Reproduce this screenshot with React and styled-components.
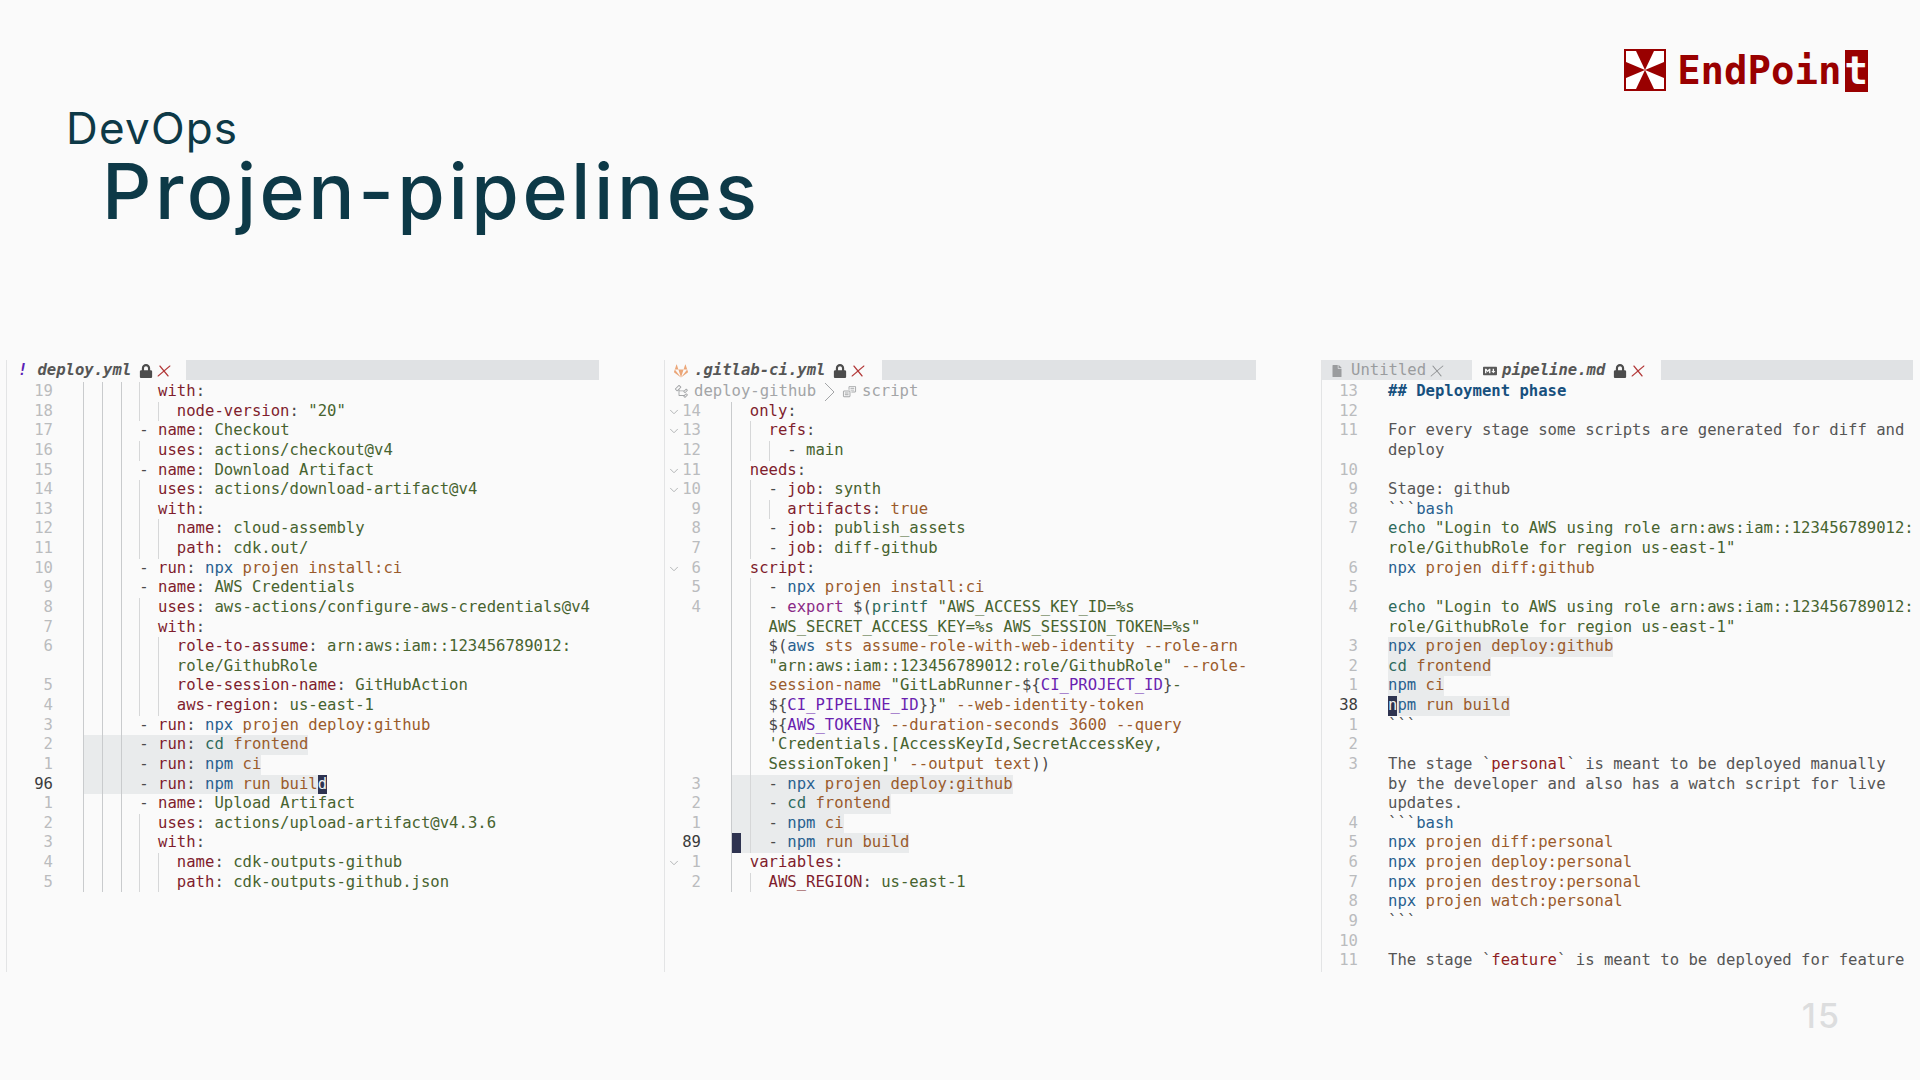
import React from 'react'
import styled, { createGlobalStyle } from 'styled-components'
import { FaFile, FaGitlab, FaLock, FaMarkdown } from 'react-icons/fa'
import { VscSymbolClass, VscSymbolEnum } from 'react-icons/vsc'
import { ChevronDown, X } from 'lucide-react'

const MONO = '"DejaVu Sans Mono", "Liberation Mono", monospace'

const TONES = {
  k: '#7f1d2d',
  g: '#47632f',
  b: '#28608f',
  o: '#9a5b2c',
  t: '#2d6a5c',
  p: '#4a4a4a',
  m: '#8a2a86',
  v: '#6a1fb0',
  r: '#8f1d22',
  x: '#555555',
}

const GlobalStyle = createGlobalStyle`
  html, body {
    margin: 0;
    padding: 0;
    background: #fafafa;
  }
`

const Slide = styled.div`
  width: 1920px;
  height: 1080px;
  display: flex;
  flex-direction: column;
  background: #fafafa;
  overflow: hidden;
`

const Header = styled.header`
  height: 360px;
  display: flex;
  justify-content: space-between;
  align-items: flex-start;
  box-sizing: border-box;
`

const Titles = styled.div`
  display: flex;
  flex-direction: column;
  padding: 103px 0 0 66px;
  color: #0d3947;
  font-family: Inter, Lato, sans-serif;
`

const Section = styled.div`
  font-size: 44px;
  line-height: 50px;
  letter-spacing: 1.2px;
`

const Title = styled.h1`
  margin: 0 0 0 36px;
  font-size: 77px;
  line-height: 76px;
  font-weight: 500;
  letter-spacing: 3.5px;
`

const Logo = styled.div`
  display: flex;
  align-items: center;
  gap: 11px;
  padding: 47px 52px 0 0;
  color: #990000;
  font-family: ${MONO};
  font-weight: 700;
  font-size: 39px;
  line-height: 42px;
`

const LogoWord = styled.div`
  display: flex;
  align-items: center;
  padding-top: 3px;
`

const LogoBox = styled.span`
  margin-left: 3px;
  background: #990000;
  color: #fafafa;
`

const Editors = styled.main`
  display: grid;
  grid-template-columns: 593px 592px 592px;
  column-gap: 65px;
  height: 612px;
  padding-left: 6px;
`

const Panel = styled.section`
  display: flex;
  flex-direction: column;
  border-left: 1px solid #e3e4e5;
  font-family: ${MONO};
  font-size: 15.6px;
  line-height: 19.63px;
  min-width: 0;
`

const TabBar = styled.div`
  display: flex;
  height: 20px;
  flex: none;
  margin-bottom: 2px;
`

const Tab = styled.div`
  display: flex;
  align-items: center;
  gap: 8px;
  padding: 1px ${p => p.$right || 12}px 0 ${p => p.$left || 11}px;
  color: ${p => (p.$muted ? '#9a9c9e' : '#565656')};
  background: ${p => (p.$muted ? '#e3e5e7' : 'transparent')};
  font-style: ${p => (p.$muted ? 'normal' : 'italic')};
  font-weight: ${p => (p.$muted ? 400 : 700)};
  white-space: nowrap;
`

const TabLabel = styled.span`
  margin-left: ${p => p.$shift || 0}px;
`

const TabFiller = styled.div`
  flex: 1;
  background: #e0e2e4;
`

const YamlMark = styled.span`
  color: #5b21b6;
  font-weight: 700;
  font-style: italic;
`

const Close = styled(X)`
  color: ${p => (p.$muted ? '#8f9193' : '#b33a3a')};
  transform: skewX(-10deg);
  margin-left: -7px;
`

const Crumbs = styled.div`
  display: flex;
  align-items: center;
  height: 19.63px;
  padding-left: 9px;
  gap: 5px;
  color: #a3a5a7;
`

const CrumbSeparator = styled.svg`
  margin: 0 2px 0 3px;
`

const Row = styled.div`
  display: flex;
  height: 19.63px;
  white-space: pre;
`

const Gutter = styled.div`
  flex: none;
  display: flex;
  justify-content: flex-end;
  align-items: center;
  position: relative;
  box-sizing: border-box;
  width: ${p => p.$width}px;
  padding-right: 30px;
  color: ${p => (p.$current ? '#3c3c3c' : '#babcbe')};
`

const Fold = styled(ChevronDown)`
  position: absolute;
  left: 2px;
  top: 3px;
  color: #a9abad;
`

const Code = styled.div`
  display: flex;
  background: ${p => (p.$selected ? '#e9ebec' : 'transparent')};
`

const Guide = styled.span`
  position: relative;
  flex: none;
  width: 2ch;
  box-sizing: border-box;
  border-left: 1px solid ${p => (p.$strong ? '#c9cbcd' : '#d6d7d8')};
`

const BlockCursor = styled.span`
  position: absolute;
  left: 0;
  top: 0;
  bottom: 0;
  width: 1ch;
  background: #2e3350;
`

const Token = styled.span`
  color: ${p => TONES[p.$tone]};
`

const Caret = styled.span`
  background: #2e3350;
  color: #f2f2f2;
`

const Heading = styled.span`
  color: #17507e;
  font-weight: 700;
`

const Footer = styled.footer`
  display: flex;
  justify-content: flex-end;
  padding: 24px 79px 0 0;
  color: #dcddde;
  font-family: Inter, sans-serif;
  font-weight: 500;
  font-size: 34px;
  line-height: 40px;
  letter-spacing: 2px;
`

// small builders so that the yaml rows stay readable
const pair = (key, value, tone = 'g') => [['k', key], ['p', ': '], [tone, value]]
const head = key => [['k', key], ['p', ':']]
const dash = parts => [['p', '- '], ...parts]
const shell = (cmd, rest, tone = 'b') => [[tone, cmd], ['o', ' ' + rest]]

const deployRows = [
  { n: 19, g: 4, c: head('with') },
  { n: 18, g: 5, c: pair('node-version', '"20"') },
  { n: 17, g: 3, c: dash(pair('name', 'Checkout')) },
  { n: 16, g: 4, c: pair('uses', 'actions/checkout@v4') },
  { n: 15, g: 3, c: dash(pair('name', 'Download Artifact')) },
  { n: 14, g: 4, c: pair('uses', 'actions/download-artifact@v4') },
  { n: 13, g: 4, c: head('with') },
  { n: 12, g: 5, c: pair('name', 'cloud-assembly') },
  { n: 11, g: 5, c: pair('path', 'cdk.out/') },
  { n: 10, g: 3, c: dash([['k', 'run'], ['p', ': '], ...shell('npx', 'projen install:ci')]) },
  { n: 9, g: 3, c: dash(pair('name', 'AWS Credentials')) },
  { n: 8, g: 4, c: pair('uses', 'aws-actions/configure-aws-credentials@v4') },
  { n: 7, g: 4, c: head('with') },
  { n: 6, g: 5, c: pair('role-to-assume', 'arn:aws:iam::123456789012:') },
  { g: 5, c: [['g', 'role/GithubRole']] },
  { n: 5, g: 5, c: pair('role-session-name', 'GitHubAction') },
  { n: 4, g: 5, c: pair('aws-region', 'us-east-1') },
  { n: 3, g: 3, c: dash([['k', 'run'], ['p', ': '], ...shell('npx', 'projen deploy:github')]) },
  { n: 2, g: 3, sel: true, c: dash([['k', 'run'], ['p', ': '], ...shell('cd', 'frontend', 't')]) },
  { n: 1, g: 3, sel: true, c: dash([['k', 'run'], ['p', ': '], ...shell('npm', 'ci')]) },
  { n: 96, g: 3, sel: true, cur: true, c: dash([['k', 'run'], ['p', ': '], ...shell('npm', 'run buil')]), caretAfter: 'd' },
  { n: 1, g: 3, c: dash(pair('name', 'Upload Artifact')) },
  { n: 2, g: 4, c: pair('uses', 'actions/upload-artifact@v4.3.6') },
  { n: 3, g: 4, c: head('with') },
  { n: 4, g: 5, c: pair('name', 'cdk-outputs-github') },
  { n: 5, g: 5, c: pair('path', 'cdk-outputs-github.json') },
]

const gitlabRows = [
  { n: 14, g: 1, fold: true, c: head('only') },
  { n: 13, g: 2, fold: true, c: head('refs') },
  { n: 12, g: 3, c: dash([['g', 'main']]) },
  { n: 11, g: 1, fold: true, c: head('needs') },
  { n: 10, g: 2, fold: true, c: dash(pair('job', 'synth')) },
  { n: 9, g: 3, c: pair('artifacts', 'true', 'o') },
  { n: 8, g: 2, c: dash(pair('job', 'publish_assets')) },
  { n: 7, g: 2, c: dash(pair('job', 'diff-github')) },
  { n: 6, g: 1, fold: true, c: head('script') },
  { n: 5, g: 2, c: dash(shell('npx', 'projen install:ci')) },
  { n: 4, g: 2, c: dash([['m', 'export'], ['p', ' $('], ['t', 'printf'], ['g', ' "AWS_ACCESS_KEY_ID=%s']]) },
  { g: 2, c: [['g', 'AWS_SECRET_ACCESS_KEY=%s AWS_SESSION_TOKEN=%s"']] },
  { g: 2, c: [['p', '$('], ['b', 'aws'], ['o', ' sts assume-role-with-web-identity --role-arn']] },
  { g: 2, c: [['g', '"arn:aws:iam::123456789012:role/GithubRole"'], ['o', ' --role-']] },
  { g: 2, c: [['o', 'session-name '], ['g', '"GitLabRunner-'], ['p', '${'], ['v', 'CI_PROJECT_ID'], ['p', '}'], ['g', '-']] },
  { g: 2, c: [['p', '${'], ['v', 'CI_PIPELINE_ID'], ['p', '}}'], ['g', '"'], ['o', ' --web-identity-token']] },
  { g: 2, c: [['p', '${'], ['v', 'AWS_TOKEN'], ['p', '}'], ['o', ' --duration-seconds 3600 --query']] },
  { g: 2, c: [['g', "'Credentials.[AccessKeyId,SecretAccessKey,"]] },
  { g: 2, c: [['g', "SessionToken]'"], ['o', ' --output text'], ['p', '))']] },
  { n: 3, g: 2, sel: true, c: dash(shell('npx', 'projen deploy:github')) },
  { n: 2, g: 2, sel: true, c: dash(shell('cd', 'frontend', 't')) },
  { n: 1, g: 2, sel: true, c: dash(shell('npm', 'ci')) },
  { n: 89, g: 2, sel: true, cur: true, block: true, c: dash(shell('npm', 'run build')) },
  { n: 1, g: 1, fold: true, c: head('variables') },
  { n: 2, g: 2, c: pair('AWS_REGION', 'us-east-1') },
]

const login = [['t', 'echo'], ['g', ' "Login to AWS using role arn:aws:iam::123456789012:']]
const loginEnd = [['g', 'role/GithubRole for region us-east-1"']]
const prose = text => [['x', text]]
const fence = [['p', '```']]
const fenceBash = [['p', '```'], ['b', 'bash']]

const pipelineRows = [
  { n: 13, title: '## Deployment phase' },
  { n: 12, c: [] },
  { n: 11, c: prose('For every stage some scripts are generated for diff and') },
  { c: prose('deploy') },
  { n: 10, c: [] },
  { n: 9, c: prose('Stage: github') },
  { n: 8, c: fenceBash },
  { n: 7, c: login },
  { c: loginEnd },
  { n: 6, c: shell('npx', 'projen diff:github') },
  { n: 5, c: [] },
  { n: 4, c: login },
  { c: loginEnd },
  { n: 3, sel: true, c: shell('npx', 'projen deploy:github') },
  { n: 2, sel: true, c: shell('cd', 'frontend', 't') },
  { n: 1, sel: true, c: shell('npm', 'ci') },
  { n: 38, sel: true, cur: true, caretBefore: 'n', c: shell('pm', 'run build') },
  { n: 1, c: fence },
  { n: 2, c: [] },
  { n: 3, c: [['x', 'The stage `'], ['r', 'personal'], ['x', '` is meant to be deployed manually']] },
  { c: prose('by the developer and also has a watch script for live') },
  { c: prose('updates.') },
  { n: 4, c: fenceBash },
  { n: 5, c: shell('npx', 'projen diff:personal') },
  { n: 6, c: shell('npx', 'projen deploy:personal') },
  { n: 7, c: shell('npx', 'projen destroy:personal') },
  { n: 8, c: shell('npx', 'projen watch:personal') },
  { n: 9, c: fence },
  { n: 10, c: [] },
  { n: 11, c: [['x', 'The stage `'], ['r', 'feature'], ['x', '` is meant to be deployed for feature']] },
]

function EditorRows({ rows, gutter, strong = 0 }) {
  return rows.map((row, i) => (
    <Row key={i}>
      <Gutter $width={gutter} $current={row.cur}>
        {row.fold && <Fold size={14} strokeWidth={1.5} />}
        {row.n}
      </Gutter>
      <Code $selected={row.sel}>
        {Array.from({ length: row.g || 0 }, (_, level) => (
          <Guide key={level} $strong={level < strong}>
            {row.block && level === 0 && <BlockCursor />}
          </Guide>
        ))}
        {row.caretBefore && <Caret>{row.caretBefore}</Caret>}
        {row.title && <Heading>{row.title}</Heading>}
        {(row.c || []).map(([tone, text], j) => (
          <Token key={j} $tone={tone}>
            {text}
          </Token>
        ))}
        {row.caretAfter && <Caret>{row.caretAfter}</Caret>}
      </Code>
    </Row>
  ))
}

function LockIcon() {
  return <FaLock size={14} color="#4c4c4c" />
}

function LogoMark() {
  return (
    <svg width="42" height="42" viewBox="0 0 42 42">
      <rect width="42" height="42" fill="#990000" />
      <g fill="#ffffff">
        <polygon points="2,2 12,2 21,21 2,13" />
        <polygon points="40,2 30,2 21,21 40,13" />
        <polygon points="2,40 12,40 21,21 2,29" />
        <polygon points="40,40 30,40 21,21 40,29" />
      </g>
    </svg>
  )
}

function CrumbChevron() {
  return (
    <CrumbSeparator width="11" height="20" viewBox="0 0 11 20" fill="none" stroke="#a3a5a7" strokeWidth="1">
      <polyline points="1,1 10,10 1,19" />
    </CrumbSeparator>
  )
}

export default function App() {
  return (
    <Slide>
      <GlobalStyle />
      <Header>
        <Titles>
          <Section>DevOps</Section>
          <Title>Projen-pipelines</Title>
        </Titles>
        <Logo>
          <LogoMark />
          <LogoWord>
            EndPoin<LogoBox>t</LogoBox>
          </LogoWord>
        </Logo>
      </Header>
      <Editors>
        <Panel>
          <TabBar>
            <Tab>
              <YamlMark>!</YamlMark>
              <TabLabel $shift={2}>deploy.yml</TabLabel>
              <LockIcon />
              <Close size={20} strokeWidth={1.3} />
            </Tab>
            <TabFiller />
          </TabBar>
          <EditorRows rows={deployRows} gutter={76} strong={3} />
        </Panel>
        <Panel>
          <TabBar>
            <Tab $left={9} $right={14}>
              <FaGitlab size={14} color="#eba678" />
              <TabLabel $shift={-2}>.gitlab-ci.yml</TabLabel>
              <LockIcon />
              <Close size={20} strokeWidth={1.3} />
            </Tab>
            <TabFiller />
          </TabBar>
          <Crumbs>
            <VscSymbolClass size={15} />
            deploy-github
            <CrumbChevron />
            <VscSymbolEnum size={15} />
            script
          </Crumbs>
          <EditorRows rows={gitlabRows} gutter={66} strong={1} />
        </Panel>
        <Panel>
          <TabBar>
            <Tab $muted $left={9} $right={25}>
              <FaFile size={12} color="#9a9c9e" />
              <TabLabel $shift={0}>Untitled</TabLabel>
              <Close size={20} strokeWidth={1.2} $muted />
            </Tab>
            <Tab $left={11} $right={13}>
              <FaMarkdown size={14} color="#5a5a5a" />
              <TabLabel $shift={-3}>pipeline.md</TabLabel>
              <LockIcon />
              <Close size={20} strokeWidth={1.3} />
            </Tab>
            <TabFiller />
          </TabBar>
          <EditorRows rows={pipelineRows} gutter={66} />
        </Panel>
      </Editors>
      <Footer>15</Footer>
    </Slide>
  )
}
